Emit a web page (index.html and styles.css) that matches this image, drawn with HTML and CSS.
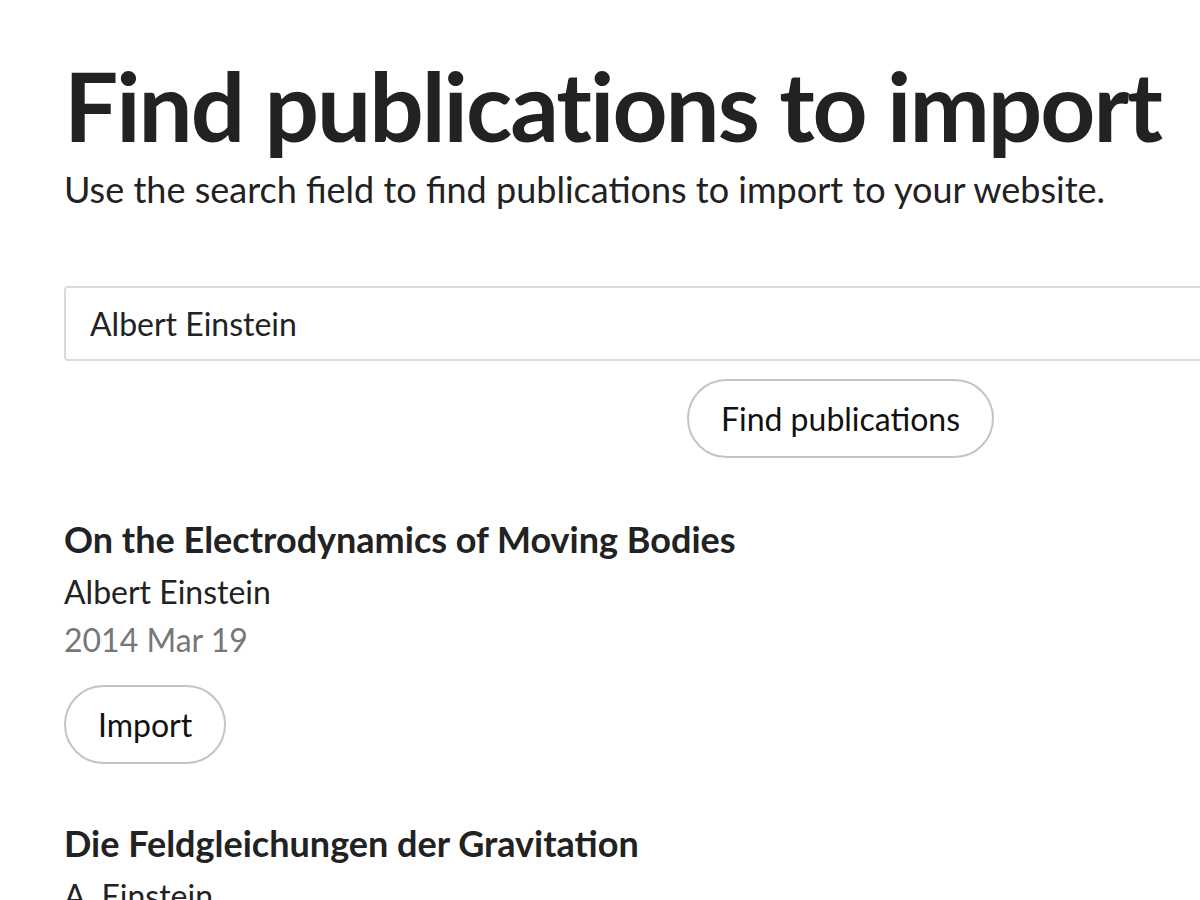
FILE: index.html
```html
<!DOCTYPE html>
<html lang="en">
<head>
    <meta charset="UTF-8">
    <meta name="viewport" content="width=device-width, initial-scale=1.0">
    <title>Find publications to import</title>
    <link rel="stylesheet" href="styles.css">
</head>
<body>
    <div class="page">
        <h1>Find publications to import</h1>
        <p class="lead">Use the search field to find publications to import to your website.</p>

        <form class="search-form">
            <input type="text" class="search-input" value="Albert Einstein">
            <button type="button" class="btn btn-find">Find publications</button>
        </form>

        <ul class="results">
            <li class="result">
                <h2>On the Electrodynamics of Moving Bodies</h2>
                <div class="authors">Albert Einstein</div>
                <div class="date">2014 Mar 19</div>
                <button type="button" class="btn">Import</button>
            </li>
            <li class="result">
                <h2>Die Feldgleichungen der Gravitation</h2>
                <div class="authors">A. Einstein</div>
                <div class="date">1915</div>
                <button type="button" class="btn">Import</button>
            </li>
        </ul>
    </div>
</body>
</html>
```

FILE: styles.css
```css
* {
    box-sizing: border-box;
    margin: 0;
    padding: 0;
}

html, body {
    overflow: hidden;
}

body {
    font-family: Lato, 'Noto Sans', sans-serif;
    color: #222;
    background-color: #fff;
}

.page {
    padding: 52px 0 0 64px;
}

h1 {
    font-size: 96px;
    font-weight: 700;
    line-height: 1.1;
    letter-spacing: -2px;
    white-space: nowrap;
    color: #222;
}

.lead {
    font-size: 36px;
    line-height: 1.2;
    margin-top: 10px;
    white-space: nowrap;
}

.search-form {
    display: flex;
    flex-direction: column;
    align-items: center;
    width: 1553px;
    margin-top: 75px;
}

.search-input {
    width: 100%;
    height: 75px;
    padding: 0 24px;
    font-family: inherit;
    font-size: 32px;
    color: #222;
    border: 2px solid #dadada;
    border-radius: 4px;
    outline: none;
}

.btn {
    display: inline-block;
    height: 79px;
    padding: 0 32px;
    font-family: inherit;
    font-size: 32px;
    color: #111;
    background-color: #fff;
    border: 2px solid #c4c4c4;
    border-radius: 40px;
    cursor: pointer;
}

.btn-find {
    margin-top: 18px;
}

.results {
    list-style: none;
    margin-top: 54px;
}

.result {
    margin-bottom: 52px;
}

.result h2 {
    font-size: 36px;
    font-weight: 700;
    line-height: 1.5;
    margin-bottom: 2px;
}

.authors {
    font-size: 32px;
    line-height: 1.5;
}

.date {
    font-size: 32px;
    line-height: 1.5;
    color: #777;
}

.result .btn {
    margin-top: 21px;
}
```
